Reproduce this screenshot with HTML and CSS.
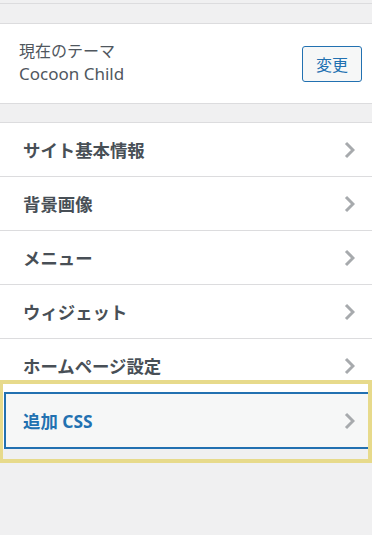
FILE: index.html
```html
<!DOCTYPE html>
<html lang="ja">
<head>
    <meta charset="UTF-8">
    <meta name="viewport" content="width=device-width, initial-scale=1.0">
    <title>カスタマイズ</title>
    <link rel="stylesheet" href="styles.css">
</head>
<body>
    <div class="top-strip"></div>

    <!-- Current theme -->
    <div class="theme-box">
        <div class="theme-info">
            <span class="theme-label">現在のテーマ</span>
            <span class="theme-name">Cocoon Child</span>
        </div>
        <button class="change-btn">変更</button>
    </div>

    <!-- Sections -->
    <ul class="section-list">
        <li class="section-item">サイト基本情報<svg class="chevron" width="11" height="18" viewBox="0 0 11 18"><polyline points="2,2 9,9 2,16"/></svg></li>
        <li class="section-item">背景画像<svg class="chevron" width="11" height="18" viewBox="0 0 11 18"><polyline points="2,2 9,9 2,16"/></svg></li>
        <li class="section-item">メニュー<svg class="chevron" width="11" height="18" viewBox="0 0 11 18"><polyline points="2,2 9,9 2,16"/></svg></li>
        <li class="section-item">ウィジェット<svg class="chevron" width="11" height="18" viewBox="0 0 11 18"><polyline points="2,2 9,9 2,16"/></svg></li>
        <li class="section-item no-line">ホームページ設定<svg class="chevron" width="11" height="18" viewBox="0 0 11 18"><polyline points="2,2 9,9 2,16"/></svg></li>
        <li class="section-item focused">追加 CSS<svg class="chevron" width="11" height="18" viewBox="0 0 11 18"><polyline points="2,2 9,9 2,16"/></svg></li>
    </ul>

    <!-- Highlight frame -->
    <div class="highlight"></div>
</body>
</html>
```

FILE: styles.css
```css
/* General Styles */
body {
    margin: 0;
    background-color: #f0f0f1;
    font-family: "Noto Sans", "Noto Sans CJK JP", sans-serif;
    color: #50575e;
    overflow: hidden;
    position: relative;
    height: 535px;
}

.top-strip {
    margin-top: 3px;
    height: 19px;
    border-top: 1px solid #dcdcde;
}

.theme-box {
    display: flex;
    align-items: center;
    justify-content: space-between;
    height: 79px;
    padding: 0 10px 0 19px;
    background-color: #fff;
    border-top: 1px solid #dcdcde;
    border-bottom: 1px solid #dcdcde;
}

.theme-info {
    display: flex;
    flex-direction: column;
    margin-top: -3px;
}

.theme-label {
    font-size: 16px;
    line-height: 24px;
}

.theme-name {
    font-size: 17px;
    line-height: 22px;
}

.change-btn {
    width: 60px;
    height: 36px;
    margin-top: 1px;
    padding: 0;
    border: 1px solid #2271b1;
    border-radius: 3px;
    background-color: #f6f7f7;
    color: #2271b1;
    font-family: "Noto Sans CJK JP", sans-serif;
    font-size: 16px;
    cursor: pointer;
}

.section-list {
    list-style: none;
    margin: 18px 0 0;
    padding: 0;
    background-color: #fff;
    border-top: 1px solid #dcdcde;
}

.section-item {
    display: flex;
    align-items: center;
    justify-content: space-between;
    height: 53px;
    padding: 0 17px 0 23px;
    border-bottom: 1px solid #dcdcde;
    color: #484f56;
    font-size: 17.4px;
    font-weight: bold;
}

.section-item.no-line {
    border-bottom: none;
}

.section-item.focused {
    margin-left: 4px;
    padding-left: 17px;
    border: 2px solid #2271b1;
    border-right: none;
    background-color: #f6f7f7;
    color: #2271b1;
}

.chevron {
    flex-shrink: 0;
}

.chevron polyline {
    fill: none;
    stroke: #a7aaad;
    stroke-width: 3;
}

/* Yellow frame drawn over the focused row */
.highlight {
    position: absolute;
    left: -1px;
    top: 380px;
    width: 365px;
    height: 75px;
    border: 4px solid #e7da8b;
}
```
